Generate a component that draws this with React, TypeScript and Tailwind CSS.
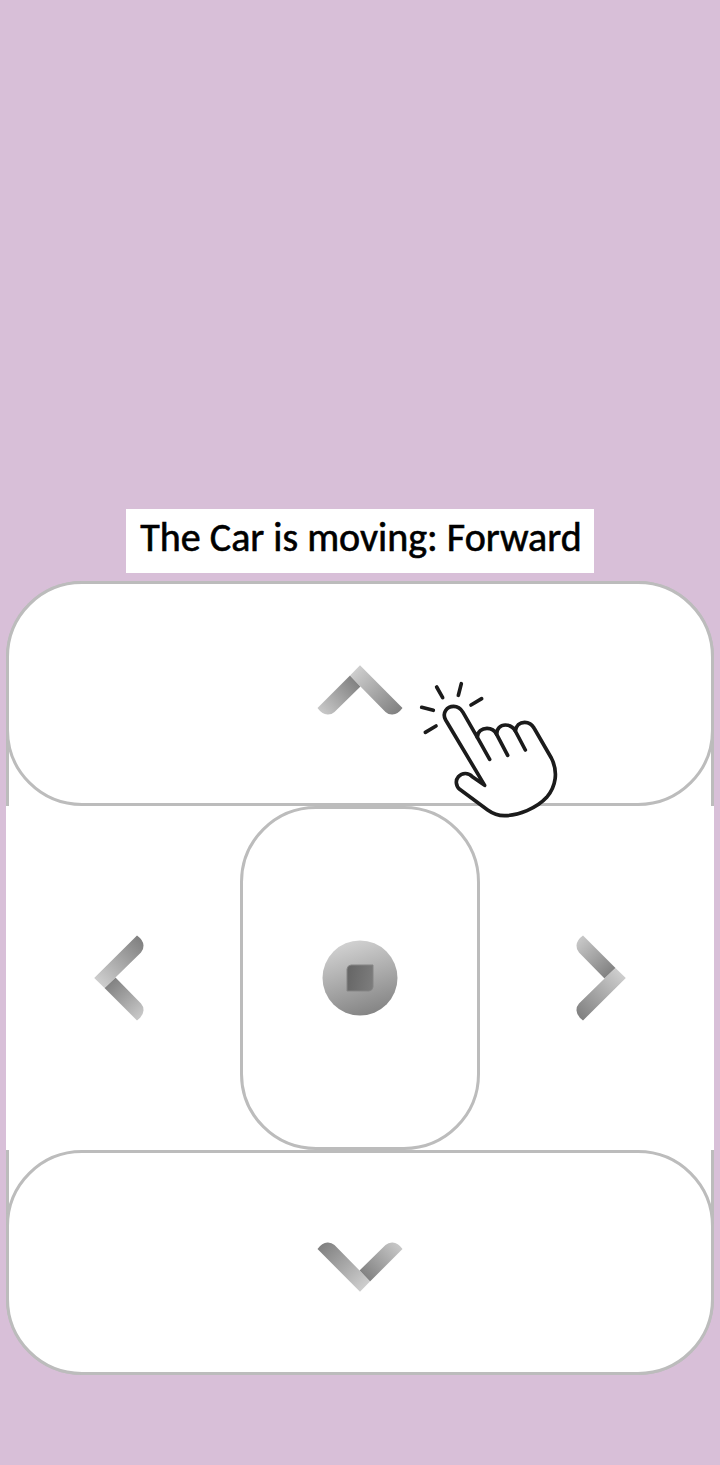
function Chevron({ id, className = "" }: { id: string; className?: string }) {
  return (
    <svg viewBox="0 0 86 86" className={`h-[86px] w-[86px] ${className}`} aria-hidden="true">
      <defs>
        <linearGradient id={`${id}-short`} gradientUnits="userSpaceOnUse" x1="38" y1="30" x2="5" y2="60">
          <stop offset="0" stopColor="#828282" />
          <stop offset="1" stopColor="#c6c6c6" />
        </linearGradient>
        <linearGradient id={`${id}-long`} gradientUnits="userSpaceOnUse" x1="38" y1="19" x2="81" y2="62">
          <stop offset="0" stopColor="#cecece" />
          <stop offset="1" stopColor="#808080" />
        </linearGradient>
      </defs>
      <path d="M33 24.5L43.5 35.5L17.5 61Q14.5 63.7 10.5 63.5Q5 63.3 0.5 57Z" fill={`url(#${id}-short)`} />
      <path d="M33 24.5L43 14.2L85.5 57Q81 63.3 75.5 63.5Q71.5 63.7 68.5 61L43.2 35.2Z" fill={`url(#${id}-long)`} />
    </svg>
  );
}

function StopIcon() {
  return (
    <svg viewBox="0 0 76 76" className="h-[76px] w-[76px]" aria-hidden="true">
      <defs>
        <linearGradient id="stop-disc" x1="0.35" y1="0" x2="0.65" y2="1">
          <stop offset="0" stopColor="#d2d2d2" />
          <stop offset="1" stopColor="#838383" />
        </linearGradient>
        <linearGradient id="stop-square" x1="0" y1="0.4" x2="1" y2="0.6">
          <stop offset="0" stopColor="#666666" />
          <stop offset="1" stopColor="#7c7c7c" />
        </linearGradient>
      </defs>
      <circle cx="38" cy="38" r="37.5" fill="url(#stop-disc)" />
      <path d="M29 25H51V47Q50.5 50.5 47 51H25V29Q25.5 25.5 29 25Z" fill="url(#stop-square)" stroke="#858585" />
    </svg>
  );
}

function TapHand() {
  return (
    <svg
      viewBox="0 0 510 480"
      className="pointer-events-none absolute top-[89px] left-[399px] h-[160px] w-[170px]"
      fill="none"
      stroke="#1b1b1b"
      strokeWidth="11"
      strokeLinecap="round"
      strokeLinejoin="round"
      aria-hidden="true"
    >
      <path
        d="M239 346L122 150C110 128 126 109 146 109C160 109 168 117 174 127L217 202C217 185 231 175 246 175C261 175 270 183 275 193C275 176 286 165 301 165C316 165 326 173 331 183C333 167 344 157 359 157C372 157 381 163 387 174L439 264C460 305 453 349 425 382C395 415 340 437 298 437C278 437 262 430 248 420L164 358C152 348 151 330 160 320C171 308 190 307 202 320Z"
        fill="white"
      />
      <path d="M217 202L254 268M275 193L308 256M331 183L361 240" />
      <path d="M95 51L113 83M169 41L160 76M230 86L198 105M50 112L85 121M93 168L61 187" />
    </svg>
  );
}

const buttonClass = "flex items-center justify-center rounded-[76px] border-[3px] border-[#bcbcbc] bg-white";

export default function App() {
  return (
    <main className="flex h-[1465px] w-[720px] flex-col items-center overflow-hidden bg-[#d8bfd8] pt-[509px]">
      <div className="flex h-[63.5px] w-[468px] shrink-0 items-center justify-center bg-white pb-[6px] pl-[2px] font-['Carlito','Calibri','Lato',sans-serif] text-[40px] leading-none whitespace-nowrap text-black [-webkit-text-stroke:0.6px_black]">
        The Car is moving: Forward
      </div>
      <section className="relative mt-[8.5px] w-[708px] shrink-0">
        <div className="h-[225px] rounded-t-[76px] border-x-[3px] border-t-[3px] border-[#bcbcbc] bg-white">
          <button aria-label="Forward" className={`${buttonClass} -mx-[3px] -mt-[3px] h-[225px] w-[708px]`}>
            <Chevron id="up" />
          </button>
        </div>
        <div className="grid h-[344px] grid-cols-[234px_240px_234px] bg-white">
          <button aria-label="Left" className="flex items-center justify-center">
            <Chevron id="left" className="-rotate-90" />
          </button>
          <button aria-label="Stop" className={buttonClass}>
            <StopIcon />
          </button>
          <button aria-label="Right" className="flex items-center justify-center">
            <Chevron id="right" className="rotate-90" />
          </button>
        </div>
        <div className="h-[225px] rounded-b-[76px] border-x-[3px] border-b-[3px] border-[#bcbcbc] bg-white">
          <button aria-label="Backward" className={`${buttonClass} -mx-[3px] h-[225px] w-[708px]`}>
            <Chevron id="down" className="rotate-180" />
          </button>
        </div>
        <TapHand />
      </section>
    </main>
  );
}
